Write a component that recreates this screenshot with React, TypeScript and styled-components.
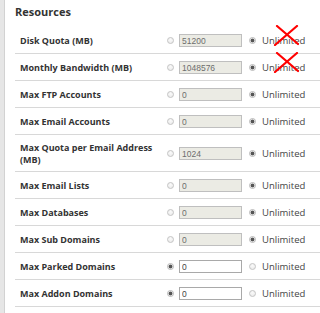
import React from "react";
import styled, { createGlobalStyle } from "styled-components";

const Global = createGlobalStyle`
  html, body { margin: 0; padding: 0; background: #fff; }
  body { font-family: "Open Sans", "Liberation Sans", sans-serif; color: #333; }
`;

const Page = styled.div`
  display: flex;
  min-height: 313px;
  width: 320px;
  overflow: hidden;
`;

const SideStrip = styled.div`
  width: 4px;
  flex: none;
  background: #e6e6e6;
  border-right: 1px solid #d2d2d2;
`;

const Panel = styled.div`
  flex: 1;
  padding: 0 0 0 10px;
`;

const Title = styled.h3`
  margin: 0;
  height: 27px;
  padding-top: 4px;
  box-sizing: border-box;
  font-size: 11px;
  font-weight: 700;
  color: #333;
`;

const Table = styled.div`
  display: flex;
  flex-direction: column;
  margin-right: -20px;
`;

const Row = styled.div<{ $tall?: boolean }>`
  display: grid;
  grid-template-columns: 147px 12px 70px 13px 1fr;
  align-items: center;
  height: ${(p) => (p.$tall ? 35 : 25)}px;
  border-bottom: 1px solid #d8d8d8;
  padding-left: 5px;
  padding-top: 1px;
  box-sizing: content-box;
`;

const Label = styled.div`
  font-size: 9px;
  font-weight: 700;
  color: #333;
  line-height: 12px;
`;

const Radio = styled.input.attrs({ type: "radio" })`
  appearance: none;
  margin: 0;
  width: 7px;
  height: 7px;
  border-radius: 50%;
  border: 1px solid #c4c4c4;
  background: radial-gradient(circle at 50% 35%, #fafafa 0%, #e8e8e8 100%);
  box-sizing: border-box;
  position: relative;
  &:checked {
    background: radial-gradient(circle, #555 0 1.6px, #eaeaea 2.2px);
    border-color: #b8b8b8;
  }
`;

const NumInput = styled.input`
  width: 63px;
  height: 13px;
  box-sizing: border-box;
  margin: 0;
  padding: 0 2px;
  font-family: "Liberation Sans", Arial, sans-serif;
  font-size: 8.5px;
  color: #444;
  border: 1px solid #a9a9a9;
  background: #fff;
  outline: none;
  &:disabled {
    background: #ebebe4;
    border-color: #bfbfbf;
    color: #6d6d6d;
  }
`;

const UnlimitedCell = styled.div`
  position: relative;
  display: flex;
  align-items: center;
`;

const UnlimitedText = styled.span`
  font-size: 9.5px;
  color: #444;
`;

const Cross = styled.svg`
  position: absolute;
  left: 11px;
  top: -9px;
  width: 26px;
  height: 21px;
  pointer-events: none;
`;

type Item = {
  label: string;
  value: string;
  unlimited: boolean;
  crossed?: boolean;
  tall?: boolean;
};

const items: Item[] = [
  { label: "Disk Quota (MB)", value: "51200", unlimited: true, crossed: true },
  { label: "Monthly Bandwidth (MB)", value: "1048576", unlimited: true, crossed: true },
  { label: "Max FTP Accounts", value: "0", unlimited: true },
  { label: "Max Email Accounts", value: "0", unlimited: true },
  { label: "Max Quota per Email Address (MB)", value: "1024", unlimited: true, tall: true },
  { label: "Max Email Lists", value: "0", unlimited: true },
  { label: "Max Databases", value: "0", unlimited: true },
  { label: "Max Sub Domains", value: "0", unlimited: true },
  { label: "Max Parked Domains", value: "0", unlimited: false },
  { label: "Max Addon Domains", value: "0", unlimited: false },
];

export default function App() {
  return (
    <>
      <Global />
      <Page>
        <SideStrip />
        <Panel>
          <Title>Resources</Title>
          <Table>
            {items.map((it, i) => (
              <Row key={i} $tall={it.tall}>
                <Label>{it.label}</Label>
                <Radio name={`r${i}`} checked={!it.unlimited} readOnly />
                <NumInput value={it.value} disabled={it.unlimited} readOnly />
                <Radio name={`r${i}`} checked={it.unlimited} readOnly />
                <UnlimitedCell>
                  <UnlimitedText>Unlimited</UnlimitedText>
                  {it.crossed && (
                    <Cross viewBox="0 0 26 21">
                      <path d="M2 20 L24 1" stroke="#f00" strokeWidth="2.2" fill="none" strokeLinecap="round" />
                      <path d="M4 1 L25 19" stroke="#f00" strokeWidth="2.2" fill="none" strokeLinecap="round" />
                    </Cross>
                  )}
                </UnlimitedCell>
              </Row>
            ))}
          </Table>
        </Panel>
      </Page>
    </>
  );
}
